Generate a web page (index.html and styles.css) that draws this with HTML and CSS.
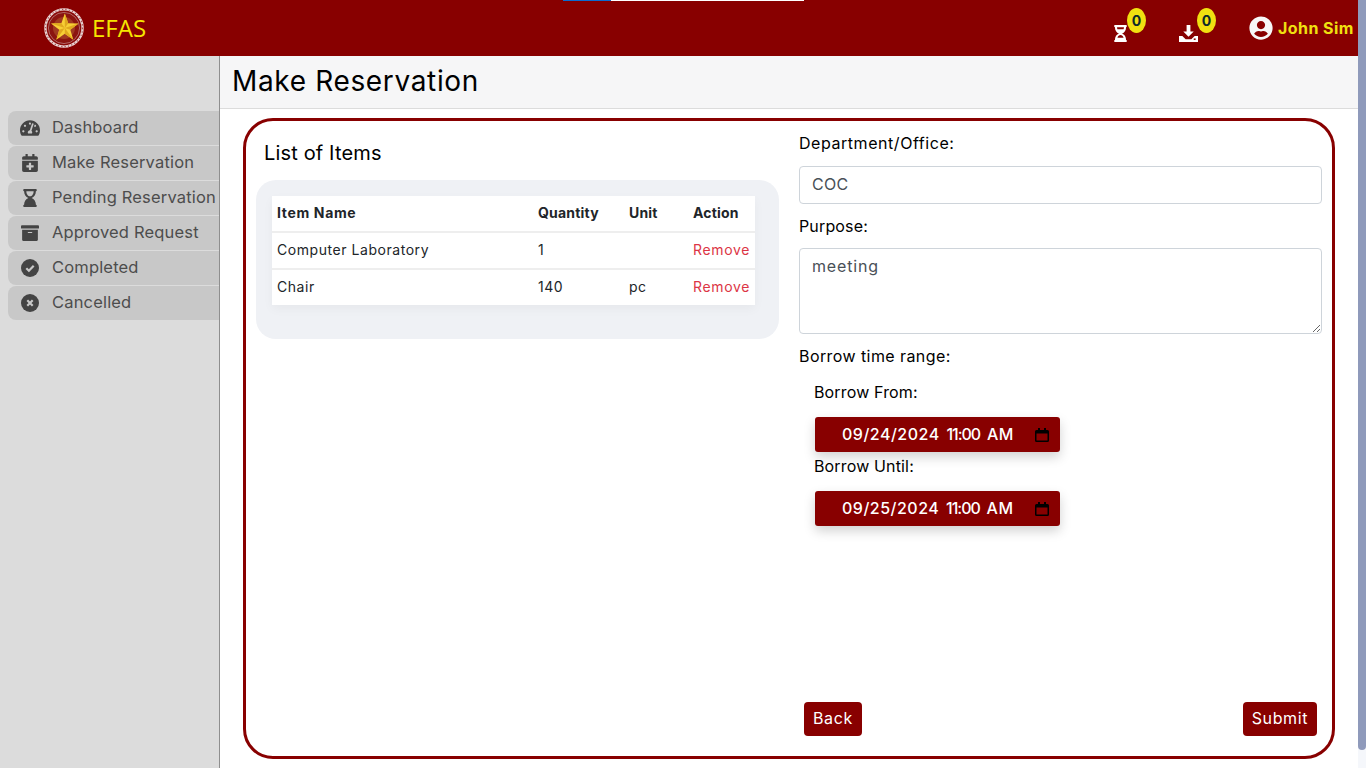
FILE: index.html
```html
<!DOCTYPE html>
<html lang="en">
<head>
<meta charset="utf-8">
<title>Make Reservation</title>
<link rel="stylesheet" href="styles.css">
</head>
<body>
<div class="page">
  <div class="viewport">
    <div class="progress"><span class="progress-blue"></span><span class="progress-white"></span></div>
    <header class="navbar">
      <a class="brand">
        <svg class="logo" viewBox="0 0 40 40">
          <circle cx="20" cy="20" r="18.600" fill="#8a0a08" stroke="#e8d4d4" stroke-width="2.400"/>
          <circle cx="20" cy="20" r="18.600" fill="none" stroke="#a85050" stroke-width="1.200" stroke-dasharray="1.300 2.100"/>
          <circle cx="20" cy="20" r="15.600" fill="#8b1410" stroke="#c08888" stroke-width="0.700"/>
          <circle cx="20" cy="20" r="11" fill="#a03a20"/>
          <polygon points="20.800,5.500 24.210,15.310 34.590,15.520 26.320,21.790 29.320,31.730 20.800,25.800 12.280,31.730 15.280,21.790 7.010,15.520 17.390,15.310" fill="#f7cf36"/>
          <polygon points="20.800,5.500 24.210,15.310 20.800,20" fill="#e0a81e"/>
          <polygon points="34.590,15.520 26.320,21.790 20.800,20" fill="#e0a81e"/>
          <polygon points="29.320,31.730 20.800,25.800 20.800,20" fill="#e0a81e"/>
          <polygon points="12.280,31.730 15.280,21.790 20.800,20" fill="#e0a81e"/>
          <polygon points="7.010,15.520 17.390,15.310 20.800,20" fill="#e0a81e"/>
        </svg>
        <span class="brand-name">EFAS</span>
      </a>
      <div class="nav-right">
        <div class="nav-icon nav-icon-first">
          <svg class="nav-glyph-hour" viewBox="0 0 384 512"><path fill="#fff" d="M360 0H24C10.745 0 0 10.745 0 24v16c0 13.255 10.745 24 24 24 0 90.965 51.016 167.734 120.842 192C75.016 280.266 24 357.035 24 448c-13.255 0-24 10.745-24 24v16c0 13.255 10.745 24 24 24h336c13.255 0 24-10.745 24-24v-16c0-13.255-10.745-24-24-24 0-90.965-51.016-167.734-120.842-192C308.984 231.734 360 154.965 360 64c13.255 0 24-10.745 24-24V24c0-13.255-10.745-24-24-24zm-75.078 384H99.080c17.059-46.797 52.096-80 92.920-80 40.821 0 75.862 33.196 92.922 80zm.019-256H99.078C91.988 108.548 88 86.748 88 64h208c0 22.805-3.987 44.587-11.059 64z"/></svg>
          <span class="badge">0</span>
        </div>
        <div class="nav-icon nav-icon-second">
          <svg class="nav-glyph-down" viewBox="0 0 20 20"><path fill="#fff" d="M8 1h4v7h3.500L10 13.500 4.500 8H8z"/><path fill="#fff" d="M0 12.500h3.500L7 16h6l3.500-3.500H20V19H0z"/><rect x="15.500" y="15.200" width="2" height="1.600" fill="#880000"/></svg>
          <span class="badge">0</span>
        </div>
        <div class="user">
          <svg class="user-glyph" viewBox="0 0 496 512"><path fill="#f7f7f7" d="M248 8C111 8 0 119 0 256s111 248 248 248 248-111 248-248S385 8 248 8zm0 96c48.600 0 88 39.400 88 88s-39.400 88-88 88-88-39.400-88-88 39.400-88 88-88zm0 344c-58.700 0-111.300-26.600-146.500-68.200 18.800-35.400 55.600-59.800 98.500-59.800 2.400 0 4.800.4 7.100 1.100 13 4.200 26.600 6.900 40.900 6.900 14.300 0 28-2.700 40.900-6.900 2.300-.7 4.700-1.100 7.100-1.100 42.900 0 79.700 24.400 98.500 59.800C359.300 421.400 306.700 448 248 448z"/></svg>
          <span class="user-name">John Sim</span>
        </div>
      </div>
    </header>
    <div class="body-row">
      <aside class="sidebar">
        <nav class="menu">
          <a class="menu-item">
            <span class="menu-icon"><svg class="ic-dash" viewBox="0 0 576 512"><path d="M288 32C128.940 32 0 160.940 0 320c0 52.800 14.250 102.260 39.060 144.800 5.610 9.620 16.300 15.200 27.440 15.200h443c11.140 0 21.830-5.580 27.440-15.200C561.750 422.260 576 372.800 576 320c0-159.060-128.940-288-288-288zm0 64c14.710 0 26.580 10.130 30.320 23.650-1.110 2.260-2.640 4.230-3.450 6.670l-9.220 27.670c-5.130 3.490-10.970 6.010-17.640 6.010-17.670 0-32-14.330-32-32S270.330 96 288 96zM96 384c-17.670 0-32-14.330-32-32s14.330-32 32-32 32 14.330 32 32-14.330 32-32 32zm48-160c-17.670 0-32-14.330-32-32s14.330-32 32-32 32 14.330 32 32-14.330 32-32 32zm246.770-72.410l-61.330 184C343.130 347.330 352 364.540 352 384c0 11.720-3.380 22.550-8.880 32H232.880c-5.500-9.450-8.880-20.280-8.880-32 0-33.940 26.500-61.430 59.900-63.590l61.340-184.010c4.170-12.560 17.730-19.450 30.360-15.170 12.570 4.190 19.350 17.790 15.170 30.360zm14.660 57.200l15.520-46.550c3.470-1.290 7.130-2.230 11.050-2.230 17.670 0 32 14.330 32 32s-14.330 32-32 32c-11.380-.01-20.890-6.280-26.570-15.220zM480 384c-17.670 0-32-14.330-32-32s14.330-32 32-32 32 14.330 32 32-14.330 32-32 32z"/></svg></span>
            <span class="menu-label">Dashboard</span>
          </a>
          <a class="menu-item">
            <span class="menu-icon"><svg class="ic-cal" viewBox="0 0 448 512"><path d="M436 160H12c-6.600 0-12-5.400-12-12v-36c0-26.500 21.500-48 48-48h48V12c0-6.600 5.400-12 12-12h40c6.600 0 12 5.400 12 12v52h128V12c0-6.600 5.400-12 12-12h40c6.600 0 12 5.400 12 12v52h48c26.500 0 48 21.500 48 48v36c0 6.600-5.400 12-12 12zM12 192h424c6.600 0 12 5.400 12 12v260c0 26.500-21.500 48-48 48H48c-26.500 0-48-21.500-48-48V204c0-6.600 5.400-12 12-12zm316 140c0-6.600-5.400-12-12-12h-60v-60c0-6.600-5.400-12-12-12h-40c-6.600 0-12 5.400-12 12v60h-60c-6.600 0-12 5.400-12 12v40c0 6.600 5.400 12 12 12h60v60c0 6.600 5.400 12 12 12h40c6.600 0 12-5.400 12-12v-60h60c6.600 0 12-5.400 12-12v-40z"/></svg></span>
            <span class="menu-label">Make Reservation</span>
          </a>
          <a class="menu-item">
            <span class="menu-icon"><svg class="ic-hour" viewBox="0 0 384 512"><path d="M360 0H24C10.745 0 0 10.745 0 24v16c0 13.255 10.745 24 24 24 0 90.965 51.016 167.734 120.842 192C75.016 280.266 24 357.035 24 448c-13.255 0-24 10.745-24 24v16c0 13.255 10.745 24 24 24h336c13.255 0 24-10.745 24-24v-16c0-13.255-10.745-24-24-24 0-90.965-51.016-167.734-120.842-192C308.984 231.734 360 154.965 360 64c13.255 0 24-10.745 24-24V24c0-13.255-10.745-24-24-24zM192 208c-57.787 0-104-66.518-104-144h208c0 77.945-46.510 144-104 144z"/></svg></span>
            <span class="menu-label">Pending Reservation</span>
          </a>
          <a class="menu-item">
            <span class="menu-icon"><svg class="ic-arch" viewBox="0 0 512 512"><path d="M32 448c0 17.700 14.300 32 32 32h384c17.700 0 32-14.300 32-32V160H32v288zm160-212c0-6.600 5.400-12 12-12h104c6.600 0 12 5.400 12 12v8c0 6.600-5.400 12-12 12H204c-6.600 0-12-5.400-12-12v-8zM480 32H32C14.300 32 0 46.300 0 64v48c0 8.800 7.200 16 16 16h480c8.800 0 16-7.200 16-16V64c0-17.700-14.300-32-32-32z"/></svg></span>
            <span class="menu-label">Approved Request</span>
          </a>
          <a class="menu-item">
            <span class="menu-icon"><svg class="ic-circ" viewBox="0 0 18 18"><circle cx="9" cy="9" r="9"/><path d="M5.300 9.200 7.900 11.700 12.700 6.800" fill="none" stroke="#c8c8c8" stroke-width="2.200"/></svg></span>
            <span class="menu-label">Completed</span>
          </a>
          <a class="menu-item">
            <span class="menu-icon"><svg class="ic-circ" viewBox="0 0 18 18"><circle cx="9" cy="9" r="9"/><path d="M6.300 6.300 11.700 11.700M11.700 6.300 6.300 11.700" fill="none" stroke="#c8c8c8" stroke-width="2.200"/></svg></span>
            <span class="menu-label">Cancelled</span>
          </a>
        </nav>
      </aside>
      <main class="content">
        <div class="title-bar"><h1 class="page-title">Make Reservation</h1></div>
        <section class="card">
          <div class="col-left">
            <h2 class="list-title">List of Items</h2>
            <div class="table-box">
              <table class="items">
                <thead>
                  <tr><th class="c-name">Item Name</th><th class="c-qty">Quantity</th><th class="c-unit">Unit</th><th>Action</th></tr>
                </thead>
                <tbody>
                  <tr><td>Computer Laboratory</td><td>1</td><td></td><td class="remove">Remove</td></tr>
                  <tr><td>Chair</td><td>140</td><td>pc</td><td class="remove">Remove</td></tr>
                </tbody>
              </table>
            </div>
          </div>
          <form class="col-right">
            <label class="label label-first">Department/Office:</label>
            <input class="field" type="text" value="COC">
            <label class="label">Purpose:</label>
            <textarea class="field area">meeting</textarea>
            <label class="label label-range">Borrow time range:</label>
            <div class="range">
              <label class="label sub-from">Borrow From:</label>
              <div class="date"><span class="date-text">09/24/2024 <span class="date-time">11:00</span> AM</span><svg class="cal" viewBox="0 0 14 14"><path d="M3 0h2v2h4V0h2v2h1.500A1.500 1.500 0 0 1 14 3.500v9a1.500 1.500 0 0 1-1.500 1.500h-11A1.500 1.500 0 0 1 0 12.500v-9A1.500 1.500 0 0 1 1.500 2H3zM1.500 5.500v7h11v-7z"/></svg></div>
              <label class="label sub-until">Borrow Until:</label>
              <div class="date"><span class="date-text">09/25/2024 <span class="date-time">11:00</span> AM</span><svg class="cal" viewBox="0 0 14 14"><path d="M3 0h2v2h4V0h2v2h1.500A1.500 1.500 0 0 1 14 3.500v9a1.500 1.500 0 0 1-1.500 1.500h-11A1.500 1.500 0 0 1 0 12.500v-9A1.500 1.500 0 0 1 1.500 2H3zM1.500 5.500v7h11v-7z"/></svg></div>
            </div>
            <div class="actions">
              <button class="btn" type="button">Back</button>
              <button class="btn" type="button">Submit</button>
            </div>
          </form>
        </section>
      </main>
    </div>
  </div>
  <div class="scrollbar"><div class="thumb"></div></div>
</div>
</body>
</html>
```

FILE: styles.css
```css
* { box-sizing: border-box; }
html, body { margin: 0; height: 100%; overflow: hidden; }
body { font-family: "Inter", "Liberation Sans", sans-serif; color: #000; background: #fff; }
.page { display: flex; height: 768px; width: 1366px; }
.viewport { width: 1358px; display: flex; flex-direction: column; position: relative; }
.progress { position: absolute; top: 0; left: 563px; display: flex; height: 1px; z-index: 2; }
.progress-blue { width: 48px; background: #0a6bd0; }
.progress-white { width: 193px; background: #fff; }
.navbar { height: 56px; flex: none; background: #880000; display: flex; align-items: center; justify-content: space-between; padding-left: 44px; }
.brand { display: flex; align-items: center; gap: 8px; }
.logo { width: 40px; height: 40px; display: block; }
.brand-name { font-family: "Open Sans", sans-serif; font-size: 24px; color: #f6e600; padding-bottom: 2px; }
.nav-right { display: flex; align-items: center; height: 56px; }
.nav-icon { position: relative; height: 56px; }
.nav-icon-first { width: 66px; }
.nav-icon-second { width: 70px; }
.nav-glyph-hour { position: absolute; left: 1px; top: 25px; width: 13px; height: 17px; }
.nav-glyph-down { position: absolute; left: 0; top: 24px; width: 19px; height: 19px; }
.badge { position: absolute; left: 14px; top: 8px; width: 19px; height: 25px; border-radius: 50%; background: #f0e010; color: #0b2a2a; font-size: 14px; font-weight: 700; display: flex; align-items: center; justify-content: center; }
.nav-icon-second .badge { left: 18px; }
.user { display: flex; align-items: center; gap: 5px; padding-right: 5px; }
.user-glyph { width: 24px; height: 24px; display: block; }
.user-name { font-size: 16px; font-weight: 700; color: #f0e010; letter-spacing: .45px; width: 75px; white-space: nowrap; }
.body-row { flex: 1; display: flex; min-height: 0; }
.sidebar { width: 220px; flex: none; background: #dcdcdc; border-right: 1px solid #8f8f8f; padding: 55px 0 0 8px; }
.menu { display: flex; flex-direction: column; gap: 1px; }
.menu-item { height: 34px; background: #c8c8c8; border-radius: 8px 0 0 8px; display: flex; align-items: center; color: #4d4d4d; font-size: 16.500px; letter-spacing: .17px; white-space: nowrap; }
.menu-label { padding-bottom: 2px; }
.menu-icon { width: 44px; flex: none; padding-left: 12px; display: flex; align-items: center; }
.menu-icon svg { fill: #444; display: block; }
.ic-dash { width: 20px; height: 18px; }
.ic-cal { width: 16px; height: 18px; margin-left: 2px; }
.ic-hour { width: 14px; height: 18px; margin-left: 3px; }
.ic-arch { width: 18px; height: 18px; margin-left: 1px; }
.ic-circ { width: 18px; height: 18px; margin-left: 1px; }
.content { flex: 1; display: flex; flex-direction: column; min-width: 0; }
.title-bar { height: 53px; flex: none; background: #f6f6f7; border-bottom: 1px solid #dcdcdc; padding: 0 0 2px 12px; display: flex; align-items: center; }
.page-title { margin: 0; font-size: 28px; font-weight: 400; letter-spacing: .65px; }
.card { margin: 9px 23px 0; height: 641px; flex: none; border: 3px solid #880000; border-radius: 30px; padding: 10px 10px 20px; display: grid; grid-template-columns: 523px 523px; column-gap: 20px; background: #fff; }
.list-title { margin: 7px 0 0 8px; font-size: 20px; font-weight: 400; line-height: 30px; letter-spacing: .15px; }
.table-box { margin-top: 12px; height: 159px; background: #eff1f5; border-radius: 20px; padding: 16px; }
.items { width: 483px; border-collapse: separate; border-spacing: 0; background: #fff; font-size: 14px; table-layout: fixed; box-shadow: 0 4px 10px rgba(0,0,0,.04); }
.items th, .items td { padding: 0 5px 2px; text-align: left; }
.items th { height: 37px; font-weight: 700; letter-spacing: .2px; color: #212529; border-bottom: 2px solid #eeeeee; }
.items td { height: 37px; color: #212529; letter-spacing: .55px; border-bottom: 2px solid #eeeeee; }
.items tbody tr:last-child td { height: 35px; border-bottom: 0; }
.items .c-name { width: 261px; letter-spacing: .65px; }
.c-qty { width: 91px; }
.c-unit { width: 64px; }
.items .remove { color: #dc3545; letter-spacing: .65px; }
.col-right { display: flex; flex-direction: column; min-height: 0; }
.label { display: block; font-size: 16px; line-height: 24px; height: 24px; margin-top: 10px; letter-spacing: .15px; }
.label-first { margin-top: 0; letter-spacing: .55px; }
.label-range { letter-spacing: .42px; }
.field { display: block; width: 523px; height: 38px; margin-top: 11px; border: 1px solid #ced4da; border-radius: 4px; padding: 6px 12px 8px; font: inherit; font-size: 16px; letter-spacing: .3px; color: #495057; background: #fff; }
.area { height: 86px; margin-top: 10px; padding-top: 7px; letter-spacing: .85px; resize: vertical; }
.range { padding-left: 15px; margin-top: 12px; }
.sub-from { margin-top: 0; }
.sub-until { margin-top: 2px; }
.date { display: flex; align-items: center; justify-content: space-between; width: 245px; height: 35px; margin: 13px 0 0 1px; border-radius: 3px; background: #880000; color: #fff; font-size: 16px; font-weight: 450; padding: 0 11px 0 27px; box-shadow: 0 5px 12px rgba(0,0,0,.18); }
.date-text { letter-spacing: .5px; word-spacing: 2px; white-space: nowrap; padding-bottom: 1px; }
.date-time { letter-spacing: -1px; }
.cal { width: 14px; height: 14px; display: block; fill: #000; }
.actions { margin-top: auto; display: flex; justify-content: space-between; padding: 0 5px; }
.btn { height: 34px; padding: 0 9px 2px; border: 0; border-radius: 4px; background: #880000; color: #fff; font: inherit; font-size: 16px; font-weight: 400; letter-spacing: .6px; }
.scrollbar { width: 8px; flex: none; background: #f5f7fb; }
.thumb { height: 750px; background: #8f9abb; border-radius: 0 0 4px 4px; }
```
